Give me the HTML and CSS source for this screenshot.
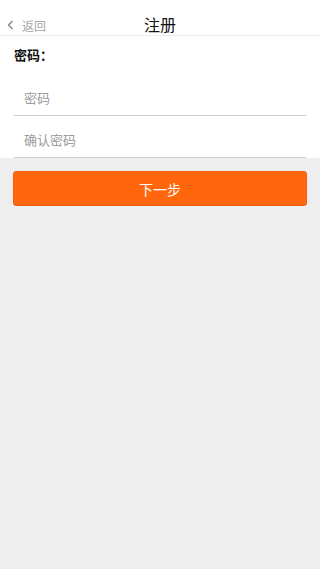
FILE: index.html
```html
<!DOCTYPE html>
<html>
<head>
<meta charset="utf-8">
<link rel="stylesheet" href="styles.css">
</head>
<body>
<div class="page">
  <header class="topbar">
    <div class="back">
      <svg class="chev" width="7" height="10" viewBox="0 0 7 10"><path d="M5.5 0.8 L1.5 5 L5.5 9.2" fill="none" stroke="#777" stroke-width="1.2"/></svg>
      <span>返回</span>
    </div>
    <div class="title">注册</div>
  </header>
  <section class="form">
    <div class="label">密码：</div>
    <div class="field"><span class="ph">密码</span></div>
    <div class="field"><span class="ph">确认密码</span></div>
  </section>
  <div class="actions">
    <button class="next">下一步</button>
  </div>
</div>
</body>
</html>
```
FILE: styles.css
```css
html, body {
  margin: 0;
  padding: 0;
  background: #eeeeee;
  font-family: "Noto Sans CJK SC", "Noto Sans", sans-serif;
}
.page {
  width: 320px;
  min-height: 569px;
  background: #eeeeee;
}
.topbar {
  height: 35px;
  box-sizing: content-box;
  background: #fff;
  border-bottom: 1px solid #ececec;
  position: relative;
  display: flex;
  align-items: flex-end;
  justify-content: center;
}
.back {
  position: absolute;
  left: 7px;
  top: 15px;
  height: 20px;
  display: flex;
  align-items: center;
  gap: 8px;
  color: #a8a8a8;
  font-size: 12px;
}
.chev { display: block; }
.title {
  font-size: 16px;
  color: #111;
  line-height: 20px;
  padding-bottom: 1px;
}
.form {
  background: #fff;
  padding: 0 14px 0 14px;
}
.label {
  font-size: 13px;
  font-weight: bold;
  color: #111;
  height: 38px;
  line-height: 38px;
}
.field {
  height: 41px;
  border-bottom: 1.5px solid #cfcfcf;
  display: flex;
  align-items: flex-end;
  padding-left: 10px;
}
.ph {
  font-size: 13px;
  color: #9b9b9b;
  line-height: 18px;
  padding-bottom: 8px;
}
.actions {
  padding: 13px 13px 0 13px;
}
.next {
  display: block;
  width: 100%;
  height: 35px;
  background: #ff660d;
  border: 1px solid #f0600a;
  border-radius: 3px;
  color: #fff;
  font-size: 14px;
  font-family: "Noto Sans CJK SC", "Noto Sans", sans-serif;
  padding: 0;
}
```
